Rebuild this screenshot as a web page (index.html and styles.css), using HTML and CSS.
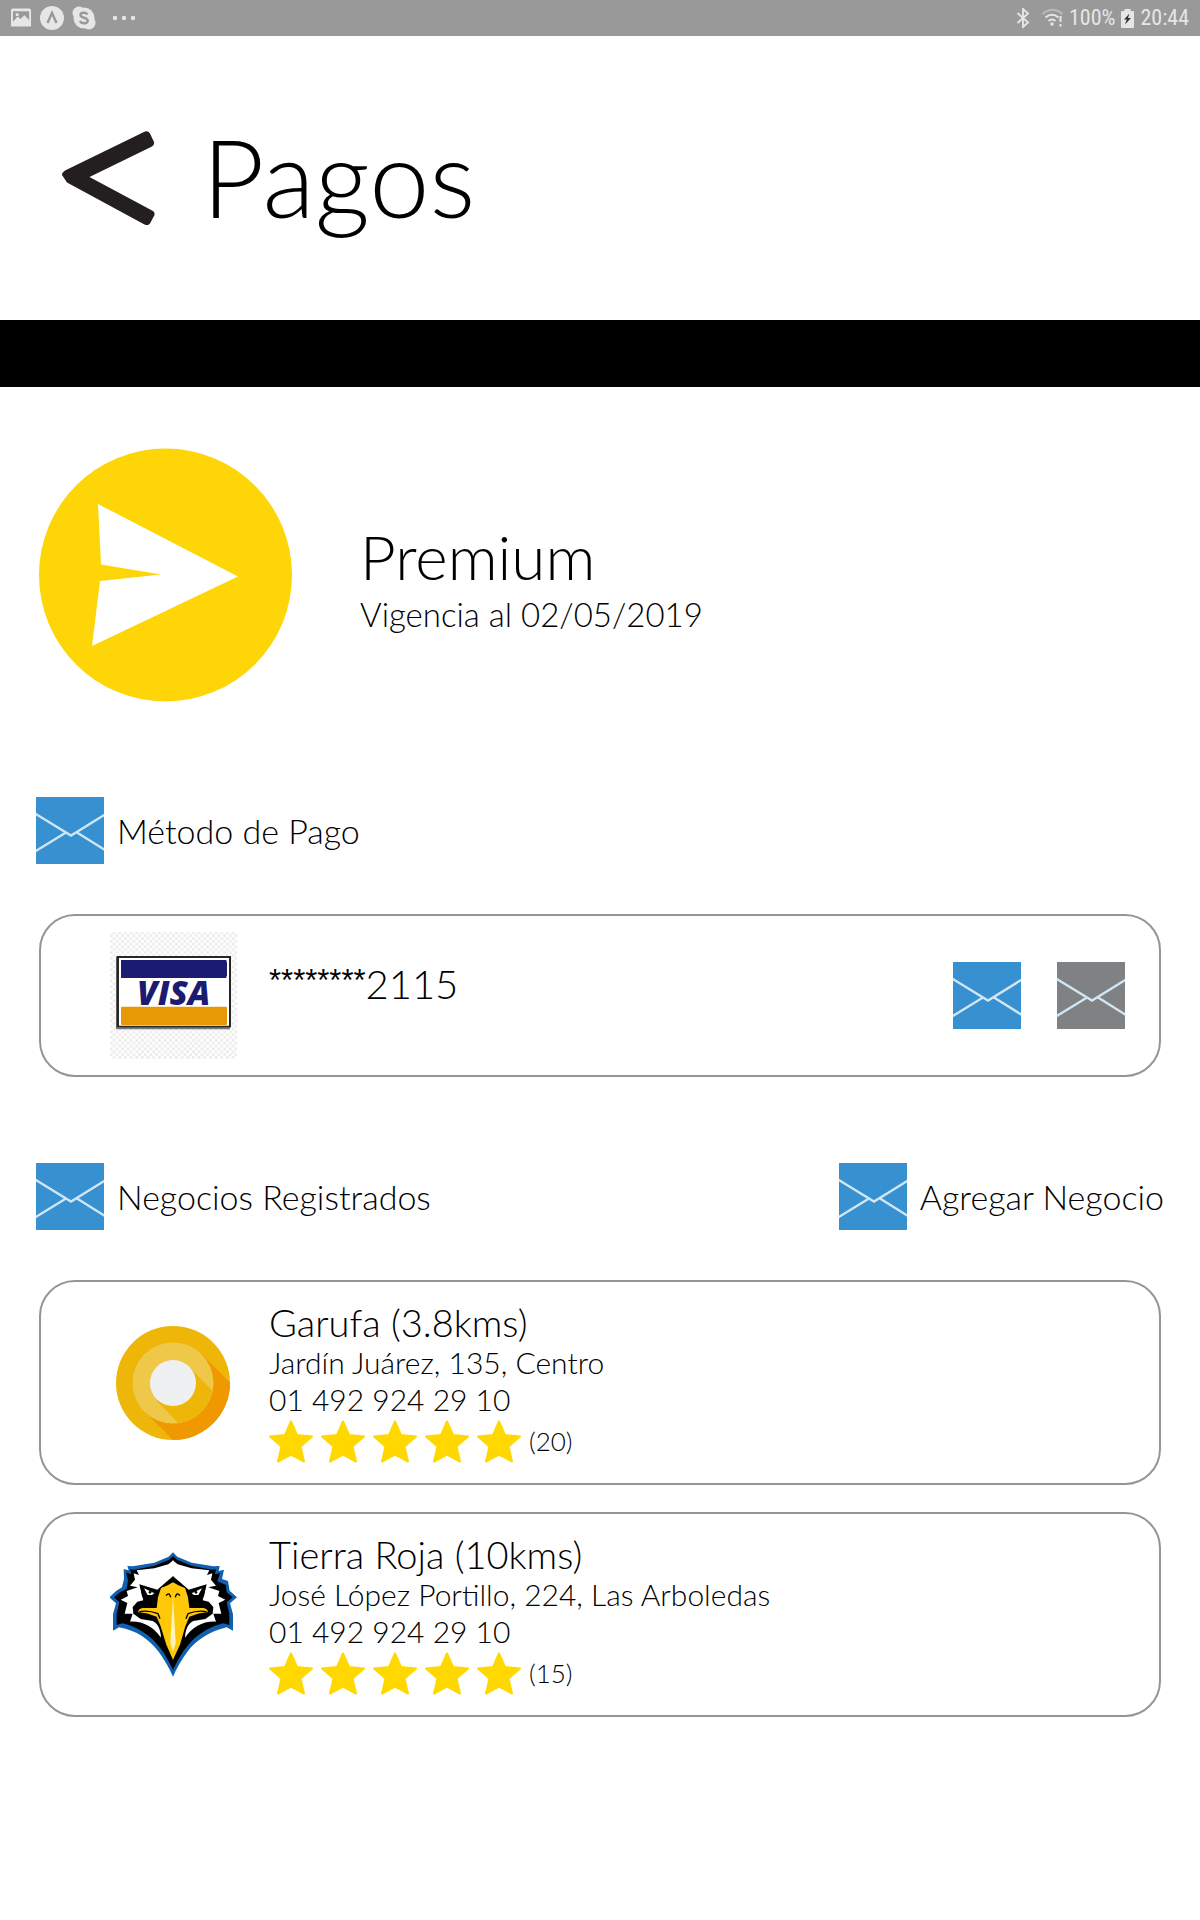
FILE: index.html
```html
<!DOCTYPE html>
<html lang="es">
<head>
<meta charset="utf-8">
<meta name="viewport" content="width=device-width, initial-scale=1">
<title>Pagos</title>
<link rel="stylesheet" href="styles.css">
</head>
<body>
<svg class="defs" aria-hidden="true">
  <symbol id="mail" viewBox="0 0 68 67">
    <path d="M-1 16.500L35 38.500L69 17.500M-1 54.500L30 35.500M41 35.500L69 53" fill="none" stroke="#d0e6f4" stroke-width="2.400"/>
  </symbol>
  <symbol id="star" viewBox="0 0 44 43">
    <path d="M22 1.500L28 15L43 16.500L31.500 26.500L35 41.500L22 34.500L9 41.500L12.500 26.500L1 16.500L16 15Z" fill="#ffd800" stroke="#ffd800" stroke-width="2" stroke-linejoin="round"/>
  </symbol>
</svg>

<div class="status">
  <div class="status-group status-apps">
    <svg width="21" height="20" viewBox="0 0 22 20"><path fill="#e6e6e6" fill-rule="evenodd" d="M2 0H19Q21 0 21 2V18Q21 19 20 19H2Q0 19 0 18V2Q0 0 2 0ZM2 3V14L7 8.500L10 11L14 7L19 12V3ZM5 5H8V8H5Z"/></svg>
    <svg width="24" height="24" viewBox="0 0 24 24"><circle cx="12" cy="12" r="12" fill="#e6e6e6"/><path d="M7.500 17L12 7L16.500 17" fill="none" stroke="#999" stroke-width="2.400"/></svg>
    <svg width="24" height="24" viewBox="0 0 24 24"><circle cx="12" cy="12" r="10.500" fill="#e6e6e6"/><circle cx="7" cy="7" r="6.500" fill="#e6e6e6"/><circle cx="17" cy="17" r="6.500" fill="#e6e6e6"/><path d="M15.500 8.500C14 6 8.500 6 8.500 9C8.500 12.500 15.700 11 15.700 14.700C15.700 18 9.500 18 8 15" fill="none" stroke="#999" stroke-width="2.400"/></svg>
    <svg class="more" width="24" height="6" viewBox="0 0 24 6"><g fill="#e6e6e6"><circle cx="3" cy="3" r="2.200"/><circle cx="12" cy="3" r="2.200"/><circle cx="21" cy="3" r="2.200"/></g></svg>
  </div>
  <div class="status-group">
    <svg width="14" height="20" viewBox="0 0 14 20"><path d="M1.500 5L12 14.500L7 19V1L12 5.500L1.500 15" fill="none" stroke="#e6e6e6" stroke-width="1.900"/></svg>
    <svg class="wifi" width="22" height="20" viewBox="0 0 22 20"><g fill="none" stroke-width="2"><path d="M1.500 6Q11.500 -2.500 21.500 6" stroke="#bbb"/><path d="M4.500 9.500Q11 4 17.500 9.500M7.500 13Q11 10 14.500 13" stroke="#e6e6e6"/></g><circle cx="11" cy="16" r="1.800" fill="#e6e6e6"/><path d="M18.500 8H20.500V14H18.500ZM18.500 16H20.500V18.500H18.500Z" fill="#e6e6e6"/></svg>
    <span>100%</span>
    <svg width="13" height="19" viewBox="0 0 13 19"><path d="M3.500 0H9.500V2H12Q13 2 13 3V18Q13 19 12 19H1Q0 19 0 18V3Q0 2 1 2H3.500Z" fill="#e6e6e6"/><path d="M8.500 4.500L3 10.500H5.700L4 15.500L10 9H7Z" fill="#333"/></svg>
    <span>20:44</span>
  </div>
</div>

<header class="header">
  <button class="back" type="button" aria-label="Volver">
    <svg width="94" height="94" viewBox="0 0 94 94"><path fill="#231f20" d="M83 .5Q86 -.5 88 2.500L92 11Q92.500 14 90 15.500L27.500 46L91 80Q93 81.500 92.500 84L88 92.500Q86 95 82.500 93.500L5 51.500L0 44Q0 41.500 3 39.500Z"/></svg>
  </button>
  <h1>Pagos</h1>
</header>
<div class="band"></div>

<main class="main">
  <section class="plan">
    <svg width="254" height="254" viewBox="0 0 254 254"><circle cx="126.500" cy="127" r="126.500" fill="#fed506"/><path d="M59 56L199 128.500L53 198L61 133L122 126.500L62 116.500Z" fill="#fff"/></svg>
    <div class="plan-text">
      <h2>Premium</h2>
      <p>Vigencia al 02/05/2019</p>
    </div>
  </section>

  <section class="group">
    <div class="bar">
      <h2 class="label"><svg class="mail"><use href="#mail"/></svg>Método de Pago</h2>
    </div>
    <article class="card card-pay">
      <svg class="thumb" viewBox="60 36 381 381">
        <defs><pattern id="check" width="17" height="17" patternUnits="userSpaceOnUse"><path d="M0 0H8.500V17H17V8.500H0Z" fill="#ededed"/></pattern></defs>
        <path d="M60 36H441V417H60Z" fill="url(#check)"/>
        <path d="M78 110H420V328H78Z" fill="#777"/>
        <path d="M80 108H423V322H80Z" fill="#262626"/>
        <path d="M87 114H417V317H87Z" fill="#fff"/>
        <path d="M93 120H409L411 130V166L408 174H93Z" fill="#1b1b72"/>
        <rect x="93" y="260" width="318" height="55" rx="4" fill="#e69805"/>
        <text x="251" y="254" text-anchor="middle" class="visa">VISA</text>
      </svg>
      <p class="number"><span class="mask">********</span>2115</p>
      <div class="actions">
        <button type="button" aria-label="Editar tarjeta"><svg class="mail"><use href="#mail"/></svg></button>
        <button type="button" aria-label="Eliminar tarjeta"><svg class="mail mail-gray"><use href="#mail"/></svg></button>
      </div>
    </article>
  </section>

  <section class="group">
    <div class="bar">
      <h2 class="label"><svg class="mail"><use href="#mail"/></svg>Negocios Registrados</h2>
      <button class="label" type="button"><svg class="mail"><use href="#mail"/></svg>Agregar Negocio</button>
    </div>
    <article class="card">
      <svg class="thumb" viewBox="-63 -64 127 127">
        <clipPath id="outer"><circle r="57"/></clipPath>
        <clipPath id="middle"><circle r="40.500"/></clipPath>
        <circle r="57" fill="#efb60a"/>
        <path clip-path="url(#outer)" d="M28.500 -29L70 12.500V70H13L-27 30Z" fill="#ef9800"/>
        <circle r="40.500" fill="#efc84a"/>
        <path clip-path="url(#middle)" d="M16 -16L60 28V60H24L-16 18Z" fill="#efb60a"/>
        <circle r="23" fill="#eff0f2"/>
      </svg>
      <div class="info">
        <h3>Garufa (3.8kms)</h3>
        <p>Jardín Juárez, 135, Centro</p>
        <p>01 492 924 29 10</p>
        <div class="rating"><svg class="star"><use href="#star"/></svg><svg class="star"><use href="#star"/></svg><svg class="star"><use href="#star"/></svg><svg class="star"><use href="#star"/></svg><svg class="star"><use href="#star"/></svg><span>(20)</span></div>
      </div>
    </article>
    <article class="card">
      <svg class="thumb" viewBox="30 34 381 381">
        <path fill="#1060b0" d="M219 38L232 51L275 69L340 80L359 79L356 94L372 90L366 118L384 124L389 153L411 173L390 191L399 224V273L380 263C330 275 290 300 262 336C245 360 230 385 219 411C208 385 193 360 176 336C148 300 110 272 57 263L39 273V224L48 191L28 173L49 153L66 143L72 118L71 88L86 92L82 79L98 80L163 69L206 51Z"/>
        <path fill="#000" d="M219 49L231 60L275 78L335 90L348 89L345 104L360 100L352 125L378 136L380 158L398 173L380 188L388 222V256L370 251C320 263 282 290 250 335C238 353 228 373 219 391C210 373 200 353 188 335C156 290 118 263 68 251L50 256V222L58 188L42 173L60 158L80 148L84 122L78 98L94 104L90 89L103 90L163 78L207 60Z"/>
        <path id="feathers" fill="#fff" d="M220 62L205 74L163 86L110 92L117 106L101 101L105 120L90 138L113 143L80 154L84 169L62 180L82 190L74 222L98 222L90 246C130 244 160 262 183 294C182 268 172 250 158 244L122 238L100 222L98 202L112 186L130 182L118 134L172 150L195 130L219 110H220Z"/>
        <use href="#feathers" transform="matrix(-1 0 0 1 438 0)"/>
        <path fill="#000" d="M219 110L236 130L258 144L270 156L318 138L312 170L300 184L322 190L334 206L328 224L312 234L276 238L260 262L243 320L219 370L195 320L178 260L162 238L126 234L110 224L104 206L116 190L138 184L126 170L120 138L168 156L180 144L202 130Z"/>
        <path fill="#fff" d="M132 146L163 161L156 166H143ZM306 146L275 161L282 166H295Z"/>
        <circle cx="150" cy="158" r="4"/><circle cx="288" cy="158" r="4"/>
        <path fill="#ffc90a" d="M219 128L235 137L255 145L264 173L268 205H310Q322 207 324 217Q295 219 268 231L256 260L240 315L219 360L199 315L182 260L170 231Q143 219 114 217Q116 207 128 205H170L174 173L183 145L203 137Z"/>
        <path fill="#fff4bb" d="M219 170L227 310L219 335L211 310Z"/>
        <path fill="none" stroke="#000" stroke-width="4" d="M198 168Q208 155 212 173M240 168Q230 155 226 173M118 216Q145 211 174 222L180 237M320 216Q293 211 264 222L258 237"/>
      </svg>
      <div class="info">
        <h3>Tierra Roja (10kms)</h3>
        <p>José López Portillo, 224, Las Arboledas</p>
        <p>01 492 924 29 10</p>
        <div class="rating"><svg class="star"><use href="#star"/></svg><svg class="star"><use href="#star"/></svg><svg class="star"><use href="#star"/></svg><svg class="star"><use href="#star"/></svg><svg class="star"><use href="#star"/></svg><span>(15)</span></div>
      </div>
    </article>
  </section>
</main>
</body>
</html>
```
FILE: styles.css
```css
* {
  box-sizing: border-box;
}

body {
  margin: 0;
  background: #fff;
  color: #000;
  font-family: Lato, "Open Sans", sans-serif;
  font-weight: 300;
}

h1, h2, h3, p {
  margin: 0;
  font-weight: inherit;
}

svg {
  display: block;
  flex: none;
}

button {
  padding: 0;
  border: 0;
  background: none;
  color: inherit;
  font: inherit;
  cursor: pointer;
}

.defs {
  width: 0;
  height: 0;
  position: absolute;
}

.status {
  display: flex;
  justify-content: space-between;
  align-items: center;
  height: 36px;
  padding: 0 11px;
  background: #999;
  color: #e6e6e6;
  font: 400 22px/36px "Roboto Condensed", Roboto, sans-serif;
}

.status-group {
  display: flex;
  align-items: center;
  gap: 6px;
}

.status-apps {
  gap: 8px;
}

.more {
  margin-left: 8px;
}

.wifi {
  margin-left: 5px;
}

.header {
  display: flex;
  align-items: center;
  gap: 46px;
  height: 284px;
  padding: 0 62px;
}

.header h1 {
  padding-bottom: 4px;
  font-size: 108px;
  line-height: 120px;
}

.band {
  height: 67px;
  background: #000;
}

.main {
  padding: 61px 36px;
}

.plan {
  display: flex;
  align-items: center;
  gap: 67px;
  padding-left: 3px;
}

.plan-text {
  padding-top: 14px;
}

.plan-text h2 {
  font-size: 62px;
  line-height: 64px;
}

.plan-text p {
  font-size: 33px;
  line-height: 52px;
}

.group {
  margin-top: 86px;
}

.plan + .group {
  margin-top: 95px;
}

.bar {
  display: flex;
  justify-content: space-between;
  margin-bottom: 50px;
}

.label {
  display: flex;
  align-items: center;
  gap: 13px;
  font-size: 34px;
  line-height: 44px;
}

.mail {
  width: 68px;
  height: 67px;
  background: #3790cf;
}

.mail-gray {
  background: #808183;
}

.card {
  display: flex;
  align-items: center;
  gap: 32px;
  min-height: 205px;
  margin: 0 3px;
  padding: 15px 34px 15px 69px;
  border: 2px solid #959595;
  border-radius: 36px;
}

.card + .card {
  margin-top: 27px;
}

.card-pay {
  min-height: 163px;
}

.thumb {
  width: 127px;
  height: 127px;
}

.visa {
  fill: #1b1b72;
  font: italic 800 100px "Open Sans", sans-serif;
}

.number {
  flex: 1;
  padding-bottom: 24px;
  font-size: 40px;
  line-height: 44px;
}

.mask {
  font: 400 31px/32px "Liberation Sans", Arial, sans-serif;
  vertical-align: 8px;
}

.actions {
  display: flex;
  gap: 36px;
}

.info {
  flex: 1;
  padding-bottom: 3px;
}

.info h3 {
  font-size: 38px;
  line-height: 44px;
}

.info p {
  font-size: 30px;
  line-height: 37px;
}

.rating {
  display: flex;
  align-items: center;
  gap: 8px;
  padding-top: 2px;
  font-size: 26px;
  line-height: 36px;
}

.star {
  width: 44px;
  height: 43px;
}
```
